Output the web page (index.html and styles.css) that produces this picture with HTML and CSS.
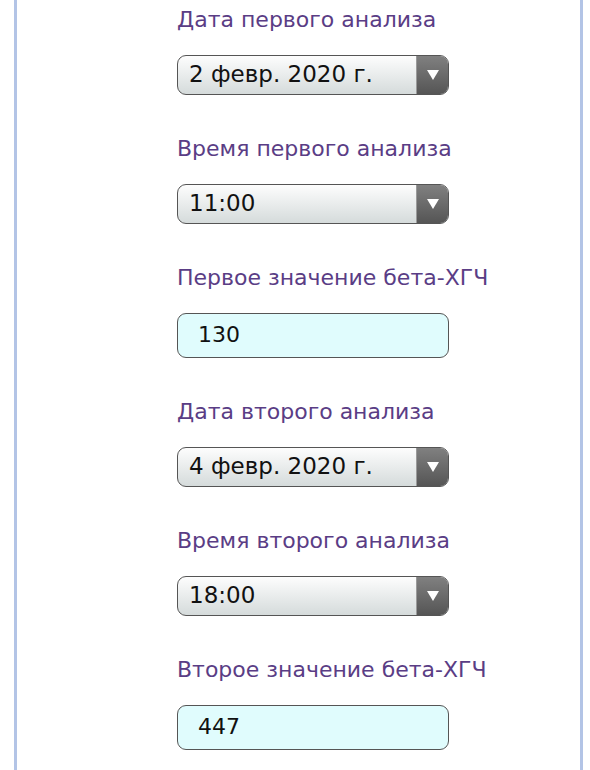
FILE: index.html
```html
<!DOCTYPE html>
<html lang="ru">
<head>
<meta charset="utf-8">
<link rel="stylesheet" href="styles.css">
</head>
<body>
<div class="frame">
  <div class="field">
    <div class="label">Дата первого анализа</div>
    <div class="select"><span class="value">2 февр. 2020 г.</span><span class="btn"><svg width="12" height="10" viewBox="0 0 12 10"><polygon points="0,0 12,0 6,10" fill="#fff"/></svg></span></div>
  </div>
  <div class="field">
    <div class="label">Время первого анализа</div>
    <div class="select"><span class="value">11:00</span><span class="btn"><svg width="12" height="10" viewBox="0 0 12 10"><polygon points="0,0 12,0 6,10" fill="#fff"/></svg></span></div>
  </div>
  <div class="field">
    <div class="label">Первое значение бета-ХГЧ</div>
    <div class="input">130</div>
  </div>
  <div class="field">
    <div class="label">Дата второго анализа</div>
    <div class="select"><span class="value">4 февр. 2020 г.</span><span class="btn"><svg width="12" height="10" viewBox="0 0 12 10"><polygon points="0,0 12,0 6,10" fill="#fff"/></svg></span></div>
  </div>
  <div class="field">
    <div class="label">Время второго анализа</div>
    <div class="select"><span class="value">18:00</span><span class="btn"><svg width="12" height="10" viewBox="0 0 12 10"><polygon points="0,0 12,0 6,10" fill="#fff"/></svg></span></div>
  </div>
  <div class="field">
    <div class="label">Второе значение бета-ХГЧ</div>
    <div class="input">447</div>
  </div>
</div>
</body>
</html>
```
FILE: styles.css
```css
html, body {
  margin: 0;
  padding: 0;
  background: #fff;
  overflow: hidden;
}
body {
  font-family: "DejaVu Sans", Verdana, sans-serif;
}
.frame {
  margin-left: 14px;
  width: 569px;
  height: 770px;
  box-sizing: border-box;
  border-left: 3px solid #b3c4e6;
  border-right: 3px solid #b3c4e6;
  padding-left: 160px;
  padding-top: 7px;
  display: flex;
  flex-direction: column;
  gap: 41px;
}
.field {
  display: flex;
  flex-direction: column;
  gap: 22px;
}
.label {
  color: #5a3d85;
  font-size: 22px;
  line-height: 26px;
}
.select {
  width: 272px;
  height: 40px;
  box-sizing: border-box;
  border: 1.5px solid #555;
  border-radius: 9px;
  display: flex;
  overflow: hidden;
  background: linear-gradient(#fdfdfd, #d5dbdb);
}
.value {
  flex: 1;
  font-size: 23px;
  line-height: 37px;
  padding-left: 11px;
  color: #111;
}
.btn {
  width: 31px;
  border-left: 1px solid #9a9a9a;
  background: linear-gradient(#808080, #555);
  display: flex;
  align-items: center;
  justify-content: center;
}
.input {
  width: 272px;
  height: 45px;
  box-sizing: border-box;
  border: 1.5px solid #555;
  border-radius: 9px;
  background: #e0fcfd;
  font-size: 22px;
  line-height: 42px;
  padding-left: 20px;
  color: #111;
}
```
